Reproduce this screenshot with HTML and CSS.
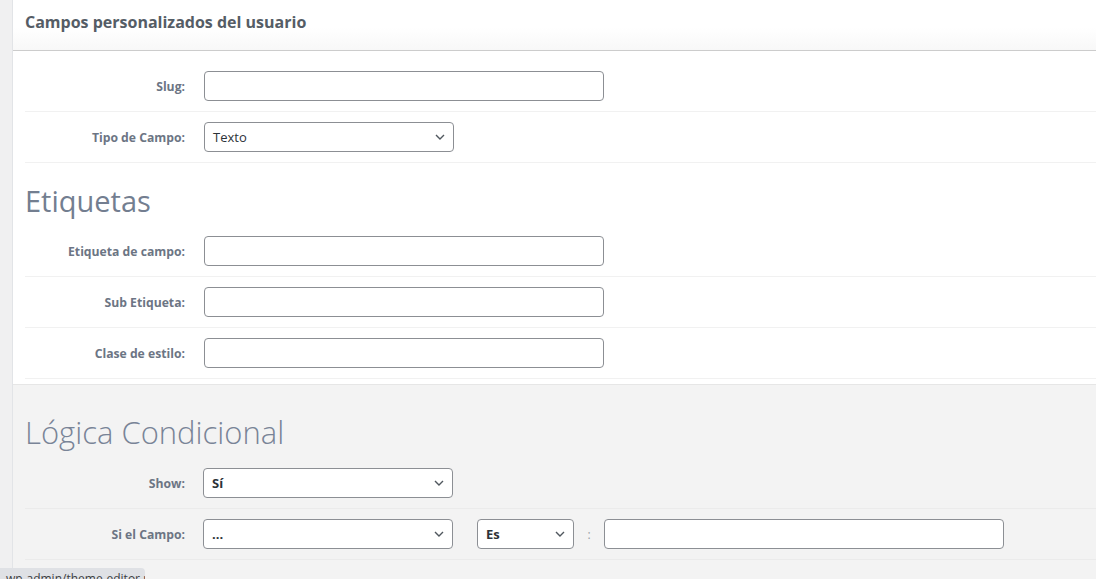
FILE: index.html
```html
<!DOCTYPE html>
<html lang="es">
<head>
<meta charset="utf-8">
<title>Campos personalizados del usuario</title>
<link rel="stylesheet" href="styles.css">
</head>
<body>
<div class="page">
  <div class="strip"></div>
  <div class="panel">
    <div class="panel-header">
      <h1 class="panel-title">Campos personalizados del usuario</h1>
    </div>

    <div class="section">
      <div class="row">
        <label class="row-label">Slug:</label>
        <div class="input wide"></div>
      </div>
      <div class="row">
        <label class="row-label">Tipo de Campo:</label>
        <div class="select mid"><span class="select-text">Texto</span><svg class="chev" viewBox="0 0 10 6" width="10" height="6"><path d="M1 1l4 4 4-4" fill="none" stroke="#50575e" stroke-width="1.4"/></svg></div>
      </div>

      <h2 class="section-title">Etiquetas</h2>
      <div class="row">
        <label class="row-label">Etiqueta de campo:</label>
        <div class="input wide"></div>
      </div>
      <div class="row">
        <label class="row-label">Sub Etiqueta:</label>
        <div class="input wide"></div>
      </div>
      <div class="row">
        <label class="row-label">Clase de estilo:</label>
        <div class="input wide"></div>
      </div>
    </div>

    <div class="section gray">
      <h2 class="section-title light">Lógica Condicional</h2>
      <div class="row">
        <label class="row-label">Show:</label>
        <div class="select mid"><span class="select-text bold">Sí</span><svg class="chev" viewBox="0 0 10 6" width="10" height="6"><path d="M1 1l4 4 4-4" fill="none" stroke="#50575e" stroke-width="1.4"/></svg></div>
      </div>
      <div class="row">
        <label class="row-label">Si el Campo:</label>
        <div class="select mid"><span class="select-text bold">...</span><svg class="chev" viewBox="0 0 10 6" width="10" height="6"><path d="M1 1l4 4 4-4" fill="none" stroke="#50575e" stroke-width="1.4"/></svg></div>
        <div class="select small"><span class="select-text bold">Es</span><svg class="chev" viewBox="0 0 10 6" width="10" height="6"><path d="M1 1l4 4 4-4" fill="none" stroke="#50575e" stroke-width="1.4"/></svg></div>
        <span class="colon">:</span>
        <div class="input wide"></div>
      </div>
    </div>
  </div>
</div>
<div class="status">wp-admin/theme-editor.php</div>
</body>
</html>
```

FILE: styles.css
```css
html, body {
  margin: 0;
  padding: 0;
  height: 100%;
  overflow: hidden;
}
body {
  font-family: "Open Sans", "Noto Sans", sans-serif;
  background: #fff;
  color: #32373c;
}
.page {
  display: flex;
  min-height: 100%;
}
.strip {
  width: 12px;
  flex: none;
  background: #f0f0f1;
  border-right: 1px solid #e2e4e7;
}
.panel {
  flex: 1;
  min-width: 0;
  background: #fff;
}
.panel-header {
  height: 51px;
  box-sizing: border-box;
  border-bottom: 1px solid #cccccc;
  background: linear-gradient(#ffffff 55%, #f8f8f8);
  padding-left: 12px;
  display: flex;
  align-items: center;
}
.panel-title {
  margin: 0;
  font-size: 16px;
  font-weight: 700;
  color: #555d66;
  position: relative;
  top: -3px;
}
.section {
  padding: 10px 0 5px 12px;
}
.section.gray {
  background: #f3f3f3;
  border-top: 1px solid #e6e6e6;
  padding: 0 0 20px 12px;
}
.row {
  display: flex;
  align-items: center;
  padding: 10px 0;
  border-bottom: 1px solid #f1f1f1;
}
.gray .row {
  border-bottom-color: #ebebeb;
}
.row-label {
  width: 160px;
  flex: none;
  box-sizing: border-box;
  text-align: right;
  margin-right: 19px;
  font-size: 12.2px;
  font-weight: 700;
  color: #6c7584;
}
.input, .select {
  height: 30px;
  box-sizing: border-box;
  border: 1px solid #8c8f94;
  border-radius: 4px;
  background: #fff;
}
.input.wide {
  width: 400px;
}
.select {
  display: flex;
  align-items: center;
  justify-content: space-between;
  padding: 0 8px 0 8px;
}
.select.mid {
  width: 250px;
}
.gray .select.mid {
  margin-left: -1px;
}
.select.small {
  width: 97px;
  margin-left: 24px;
}
.select-text {
  font-size: 13px;
  color: #2c3338;
}
.select-text.bold {
  font-weight: 700;
}
.chev {
  display: block;
}
.colon {
  width: 30px;
  text-align: center;
  font-size: 12px;
  color: #9aa0a6;
}
.section-title {
  margin: 0;
  height: 63px;
  box-sizing: border-box;
  padding-top: 18px;
  font-size: 29px;
  line-height: 40px;
  font-weight: 500;
  color: #737e90;
}
.section-title.light {
  height: 73px;
  padding-top: 27px;
  font-size: 31px;
  font-weight: 300;
  color: #798497;
}
.status {
  position: absolute;
  left: 0;
  bottom: -9px;
  width: 145px;
  height: 20px;
  box-sizing: border-box;
  padding: 2px 0 0 6px;
  background: #dfe1e5;
  border-top-right-radius: 4px;
  font-size: 12px;
  color: #3c4043;
  white-space: nowrap;
  overflow: hidden;
}
```
